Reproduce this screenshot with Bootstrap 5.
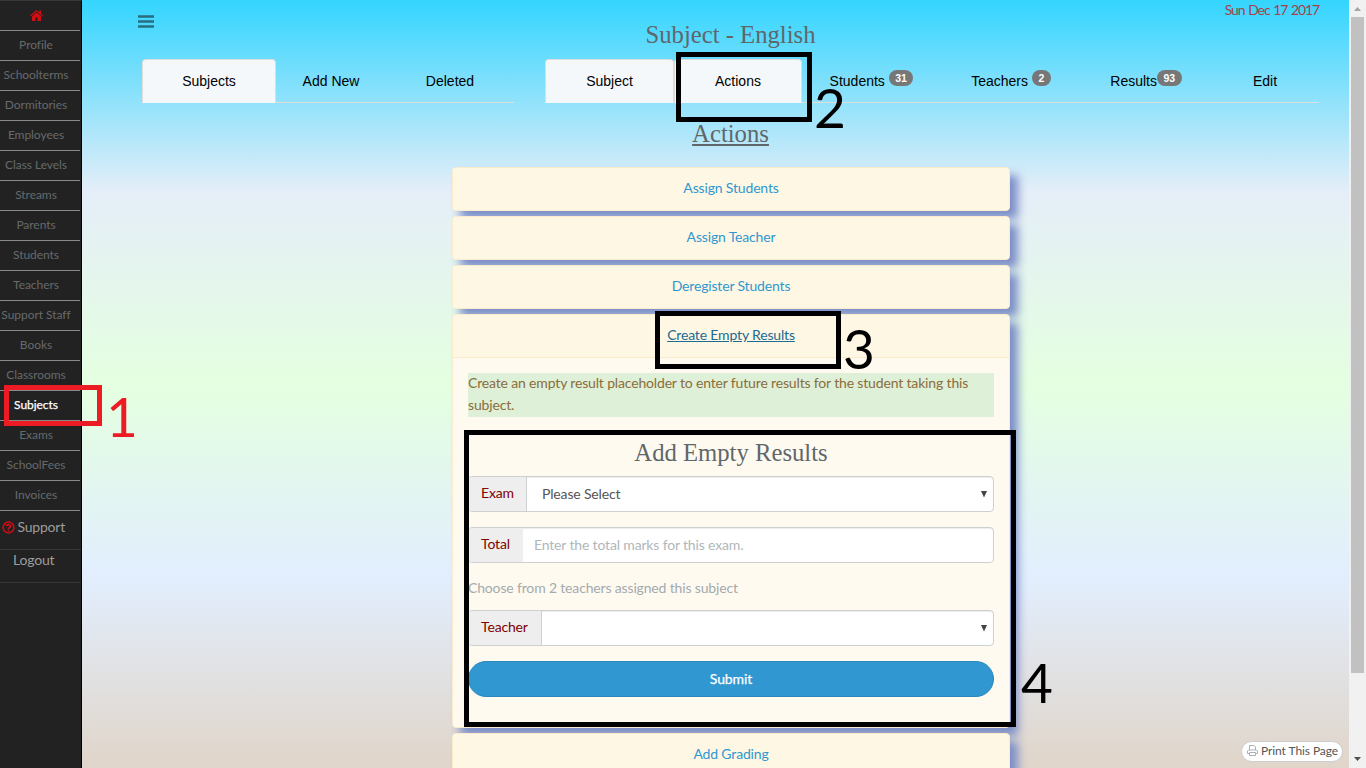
<!DOCTYPE html>
<html lang="en">
<head>
<meta charset="utf-8">
<title>Subject - English</title>
<link href="https://cdn.jsdelivr.net/npm/bootstrap@5.3.0/dist/css/bootstrap.min.css" rel="stylesheet">
<style>
html, body { height: 100%; overflow: hidden; }
body { font: 14px/22px Lato, "Noto Sans", sans-serif; letter-spacing: -.16px; color: #666; }
.app { height: 768px; position: relative; overflow: hidden; }
.sidebar { width: 82px; background: #222; border-right: 1px solid #000; border-top: 1px solid #383838; }
.sidebar .item { height: 30px; width: 80px; padding: 0 8px 1px 0; border-bottom: 1px solid #8a8a8a; font-size: 12px; line-height: 27px; letter-spacing: -.05px; text-align: center; color: #666a6c; text-decoration: none; white-space: nowrap; display: block; }
.sidebar .item.current { color: #fff; -webkit-text-stroke: .25px #fff; }
.sidebar .big { color: #9d9d9d; font-size: 14px; border-bottom: 1px solid #363636; text-decoration: none; white-space: nowrap; letter-spacing: -.2px; }
.support { height: 39px; padding: 5px 0 0 2px; }
.support svg { margin-right: -1px; vertical-align: -2px; }
.logout { height: 33px; padding: 0 0 0 13px; line-height: 20px; }
.main-area { width: 1267px; background: linear-gradient(#33d5ff, #e5eef8 25%, #e4ffe0 50%, #e2eefe 75%, #e0d5c9); }
.title-text { font: 24.7px/26px "Liberation Serif", serif; letter-spacing: 0; color: #5f676b; margin: 0; text-align: center; }
.topline { height: 59px; }
.burger { position: absolute; left: 138px; top: 15px; }
.date { position: absolute; right: 47px; top: -1px; color: #a5424b; letter-spacing: -1.1px; word-spacing: 1.2px; }
.heading-row { padding: 22px 0 0 30px; }
.tabs { font: 14px/20px "Liberation Sans", sans-serif; letter-spacing: 0; height: 44px; }
.tabs a { color: #000; text-decoration: none; border-bottom: 1px solid #ddd; text-align: center; height: 44px; padding-top: 12px; white-space: nowrap; }
.tabs a.on { background: #f5f8fa; border: 1px solid #ddd; border-bottom-color: #f5f8fa; border-radius: 4px 4px 0 0; padding-top: 11px; }
.pill { background: #777; color: #fff; font-size: 10.5px; font-weight: 700; line-height: 16px; border-radius: 10px; padding: 0 6.5px; display: inline-block; position: relative; top: -4px; }
.stack { width: 558px; margin: 20px 0 0 370px; gap: 5px; }
.box { border: 1px solid #faebcc; border-radius: 4px; background: #fffaf0; box-shadow: 8px 8px 10px rgb(124, 142, 200); }
.box-head { background: #fef7e3; height: 42px; padding-top: 9px; text-align: center; border-radius: 3px; }
.box-head a { color: #3097d1; text-decoration: none; }
.box-head a.open { color: #216a94; text-decoration: underline; }
.box-main { border-top: 1px solid #faebcc; height: 370px; padding: 15px 15px 0; }
.hint { background: #dff0d8; color: #8a6d3b; height: 44px; margin-bottom: 23px; }
.hint span { position: relative; top: -1px; }
.field { height: 36px; border: 1px solid #ccd0d2; border-radius: 4px; background: #fff; overflow: hidden; box-shadow: inset 0 1px 1px rgba(0,0,0,.075); }
.field .tag { background: #eee; color: #800000; padding: 5px 0 0 12px; border-right: 1px solid #ccd0d2; flex: none; }
.field .val { padding: 6px 0 0 15px; color: #555; }
.field svg { margin: 14px 6px 0 auto; }
.go { height: 36px; border-radius: 18px; background: #3097d1; border: 1px solid #2a88bd; color: #fff; font-size: 14px; line-height: 22px; padding: 5px; letter-spacing: -.1px; -webkit-text-stroke: .25px #fff; }
.print-btn { position: absolute; left: 1241px; top: 741px; width: 102px; height: 21px; border: 1px solid #ccc; border-radius: 11px; background: #fff; font-size: 12px; line-height: 18px; letter-spacing: -.08px; padding-left: 5px; color: #555; white-space: nowrap; }
.scroll { width: 17px; background: #f1f1f1; }
.thumb { width: 13px; height: 656px; background: #c1c1c1; }
.mark-box { position: absolute; border: 5px solid #000; z-index: 5; }
.mark-num { position: absolute; font-size: 55px; line-height: 42px; color: #000; z-index: 5; letter-spacing: 0; }
.m1 { left: 4px; top: 385px; width: 98px; height: 41px; border-color: #ed1c24; }
.m2 { left: 676px; top: 52px; width: 136px; height: 70px; }
.m3 { left: 655px; top: 311px; width: 186px; height: 58px; }
.m4 { left: 464px; top: 430px; width: 552px; height: 297px; }
</style>
</head>
<body>
<div class="app d-flex">
  <nav class="sidebar d-flex flex-column flex-shrink-0">
    <a href="#" class="item"><svg width="13" height="11" viewBox="0 0 13 11" fill="#d40d12"><path d="M6.5 0 0 5.6l.7.8L6.5 1.6l5.8 4.8.7-.8-2-1.7V.5H9.3v2zM6.500 2.500 2 6.200V11h3.500V7.500h2V11H11V6.200z"/></svg></a>
    <a href="#" class="item">Profile</a><a href="#" class="item">Schoolterms</a><a href="#" class="item">Dormitories</a><a href="#" class="item">Employees</a><a href="#" class="item">Class Levels</a><a href="#" class="item">Streams</a><a href="#" class="item">Parents</a><a href="#" class="item">Students</a><a href="#" class="item">Teachers</a><a href="#" class="item">Support Staff</a><a href="#" class="item">Books</a><a href="#" class="item">Classrooms</a><a href="#" class="item current">Subjects</a><a href="#" class="item">Exams</a><a href="#" class="item">SchoolFees</a><a href="#" class="item">Invoices</a>
    <a href="#" class="big support"><svg width="13" height="13" viewBox="0 0 13 13" fill="none" stroke="#d40d12"><circle cx="6.500" cy="6.500" r="5.400" stroke-width="1.500"/><path d="M4.500 5.200c.2-2.300 4.200-2.100 4 .1C8.400 6.400 6.500 6.500 6.500 8M6.500 8.800v1.500" stroke-width="1.700"/></svg> Support</a>
    <a href="#" class="big logout">Logout</a>
  </nav>
  <main class="main-area flex-shrink-0">
    <svg class="burger" width="16" height="13" viewBox="0 0 16 13"><path d="M0 1.500h16M0 6.500h16M0 11.500h16" stroke="#286d80" stroke-width="2.600"/></svg>
    <div class="date">Sun Dec 17 2017</div>
    <div class="topline heading-row"><h3 class="title-text">Subject - English</h3></div>
    <div class="tabs d-flex">
      <div class="d-flex" style="margin-left:60px;width:372px"><a href="#" class="on" style="width:134px">Subjects</a><a href="#" style="width:110px">Add New</a><a href="#" style="width:128px">Deleted</a></div>
      <div class="d-flex" style="margin-left:31px;width:774px"><a href="#" class="on" style="width:129px">Subject</a><a href="#" class="on" style="width:128px">Actions</a><a href="#" style="width:139px">Students <span class="pill">31</span></a><a href="#" style="width:140px">Teachers <span class="pill">2</span></a><a href="#" style="width:130px">Results<span class="pill">93</span></a><a href="#" style="width:108px">Edit</a></div>
    </div>
    <div style="padding:18px 0 0 30px"><h3 class="title-text text-decoration-underline">Actions</h3></div>
    <div class="stack d-flex flex-column">
      <div class="box"><div class="box-head"><a href="#">Assign Students</a></div></div>
      <div class="box"><div class="box-head"><a href="#">Assign Teacher</a></div></div>
      <div class="box"><div class="box-head"><a href="#">Deregister Students</a></div></div>
      <div class="box"><div class="box-head"><a href="#" class="open">Create Empty Results</a></div>
        <div class="box-main">
          <div class="hint"><span>Create an empty result placeholder to enter future results for the student taking this subject.</span></div>
          <h3 class="title-text">Add Empty Results</h3>
          <div class="field d-flex" style="margin-top:10px"><span class="tag" style="width:58px">Exam</span><span class="val">Please Select</span><svg width="6" height="7" viewBox="0 0 6 7"><path d="M0 0h6L3 6.500z" fill="#444"/></svg></div>
          <div class="field d-flex" style="margin-top:15px"><span class="tag border-0" style="width:54px">Total</span><span class="val" style="padding-left:11px;color:#b1b7ba">Enter the total marks for this exam.</span></div>
          <div style="margin-top:14px;color:#a4aaae">Choose from 2 teachers assigned this subject</div>
          <div class="field d-flex" style="margin-top:11px"><span class="tag" style="width:73px">Teacher</span><svg width="6" height="7" viewBox="0 0 6 7"><path d="M0 0h6L3 6.500z" fill="#444"/></svg></div>
          <button class="go btn w-100 d-block" style="margin-top:15px">Submit</button>
        </div>
      </div>
      <div class="box"><div class="box-head"><a href="#">Add Grading</a></div></div>
    </div>
  </main>
  <aside class="scroll flex-shrink-0 d-flex flex-column align-items-center">
    <svg width="17" height="17" viewBox="0 0 17 17" class="flex-shrink-0"><path d="M5 11h7L8.500 7z" fill="#a3a3a3"/></svg>
    <div class="thumb"></div>
    <svg width="17" height="17" viewBox="0 0 17 17" class="mt-auto"><path d="M5 6h7l-3.500 4z" fill="#505050"/></svg>
  </aside>
  <div class="print-btn"><svg width="11" height="11" viewBox="0 0 11 11" fill="none" stroke="#aab0b4" style="vertical-align:-1px"><path d="M2.500 5V.5h4.500l1.500 1.500V5M2.500 8.500H.5V6l1-1h8l1 1v2.500h-2M2.500 7.500h6v3h-6z"/></svg> Print This Page</div>
  <div class="mark-box m1"></div><div class="mark-num" style="left:106px;top:395px;color:#ed1c24">1</div>
  <div class="mark-box m2"></div><div class="mark-num" style="left:814px;top:86px">2</div>
  <div class="mark-box m3"></div><div class="mark-num" style="left:843px;top:327px">3</div>
  <div class="mark-box m4"></div><div class="mark-num" style="left:1021px;top:661px">4</div>
</div>
<script src="https://cdn.jsdelivr.net/npm/bootstrap@5.3.0/dist/js/bootstrap.bundle.min.js"></script>
</body>
</html>
